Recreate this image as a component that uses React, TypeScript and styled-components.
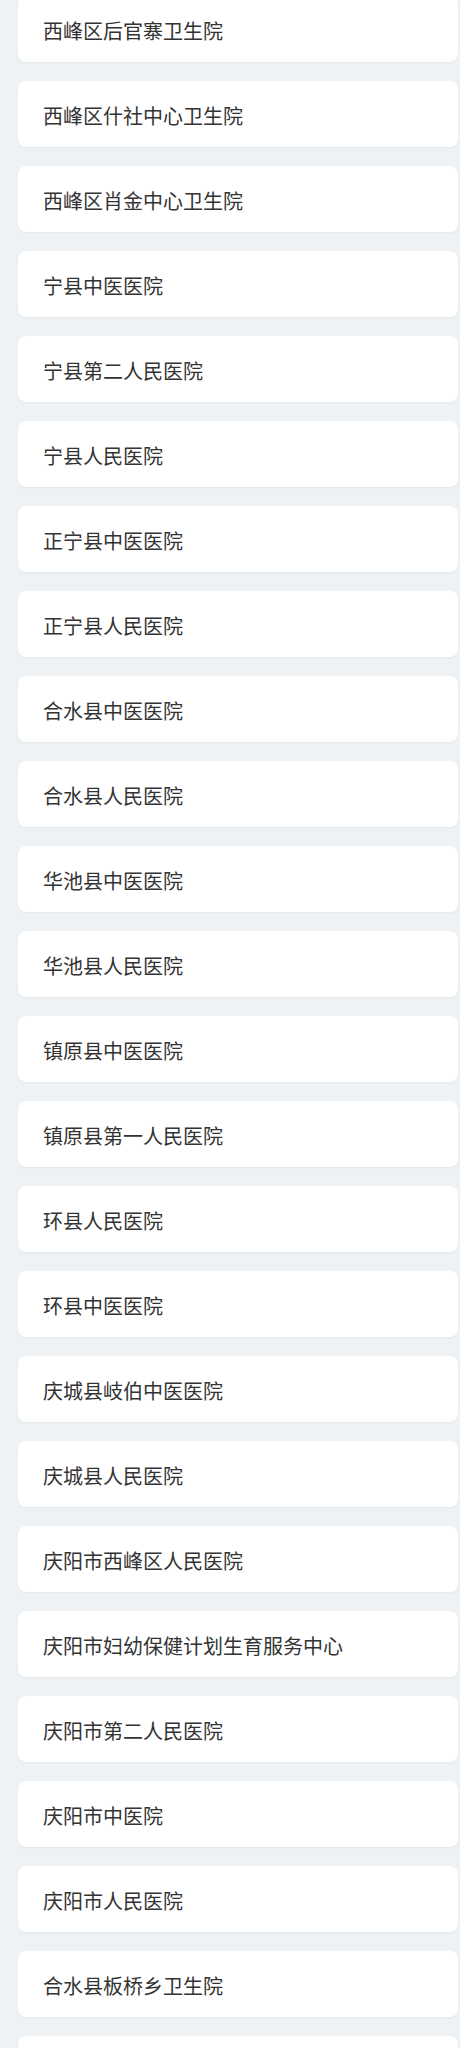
import React from "react";
import styled, { createGlobalStyle } from "styled-components";

const Global = createGlobalStyle`
  html, body {
    margin: 0;
    padding: 0;
    background: #eef2f5;
  }
  body {
    font-family: "Noto Sans CJK SC", "Noto Sans", sans-serif;
  }
`;

const Page = styled.div`
  background: #eef2f5;
  padding: 0 2px 0 18px;
  min-height: 2048px;
  overflow: hidden;
`;

const List = styled.ul`
  list-style: none;
  margin: -4px 0 0 0;
  padding: 0;
  display: flex;
  flex-direction: column;
  gap: 19px;
`;

const Card = styled.li`
  height: 66px;
  box-sizing: border-box;
  background: #ffffff;
  border-radius: 8px;
  box-shadow: 0 1px 2px rgba(40, 60, 80, 0.06);
  display: flex;
  align-items: center;
  padding: 3px 24px 0 25px;
`;

const Name = styled.span`
  font-size: 20px;
  line-height: 26px;
  color: #333333;
  white-space: nowrap;
`;

const hospitals = [
  "西峰区后官寨卫生院",
  "西峰区什社中心卫生院",
  "西峰区肖金中心卫生院",
  "宁县中医医院",
  "宁县第二人民医院",
  "宁县人民医院",
  "正宁县中医医院",
  "正宁县人民医院",
  "合水县中医医院",
  "合水县人民医院",
  "华池县中医医院",
  "华池县人民医院",
  "镇原县中医医院",
  "镇原县第一人民医院",
  "环县人民医院",
  "环县中医医院",
  "庆城县岐伯中医医院",
  "庆城县人民医院",
  "庆阳市西峰区人民医院",
  "庆阳市妇幼保健计划生育服务中心",
  "庆阳市第二人民医院",
  "庆阳市中医院",
  "庆阳市人民医院",
  "合水县板桥乡卫生院",
  "",
];

export default function App() {
  return (
    <>
      <Global />
      <Page>
        <List>
          {hospitals.map((h, i) => (
            <Card key={i}>{h && <Name>{h}</Name>}</Card>
          ))}
        </List>
      </Page>
    </>
  );
}
